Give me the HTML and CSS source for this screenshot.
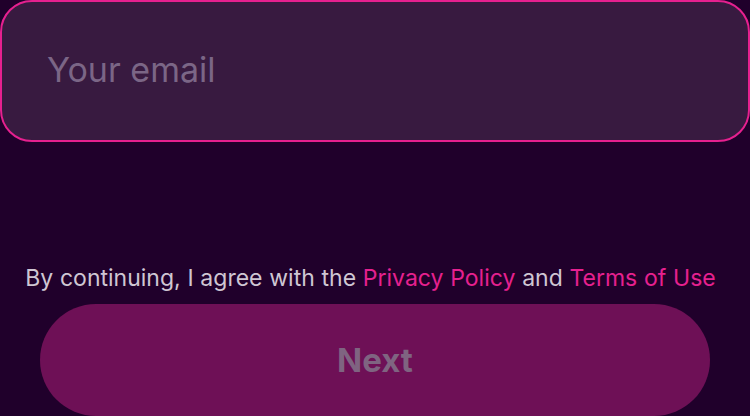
FILE: index.html
```html
<!DOCTYPE html>
<html>
<head>
<meta charset="utf-8">
<link rel="stylesheet" href="styles.css">
</head>
<body>
<div class="screen">
  <div class="field"><span class="placeholder">Your email</span></div>
  <div class="spacer"></div>
  <p class="terms">By continuing, I agree with the <span class="link">Privacy Policy</span> and <span class="link">Terms of Use</span></p>
  <div class="btn">Next</div>
</div>
</body>
</html>
```
FILE: styles.css
```css
html, body { margin: 0; padding: 0; }
body {
  background: #20002b;
  width: 750px;
  height: 416px;
  overflow: hidden;
  font-family: Inter, "Open Sans", sans-serif;
}
.screen {
  display: flex;
  flex-direction: column;
}
.field {
  box-sizing: border-box;
  height: 142px;
  width: 750px;
  border: 2px solid #e6208f;
  border-radius: 32px;
  background: #381a40;
  display: flex;
  align-items: center;
  padding-left: 45px;
  padding-bottom: 4px;
}
.placeholder {
  color: #7b6686;
  font-size: 34px;
}
.spacer { height: 120px; }
.terms {
  margin: 0;
  padding-right: 9px;
  text-align: center;
  color: #cfc6d3;
  font-size: 23px;
  line-height: 32px;
  word-spacing: 0.3px;
}
.link { color: #e6208f; }
.btn {
  margin: 10px 40px 0;
  height: 112px;
  border-radius: 56px;
  background: #6e1056;
  color: #7f6481;
  font-weight: 700;
  font-size: 33px;
  display: flex;
  align-items: center;
  justify-content: center;
}
```
